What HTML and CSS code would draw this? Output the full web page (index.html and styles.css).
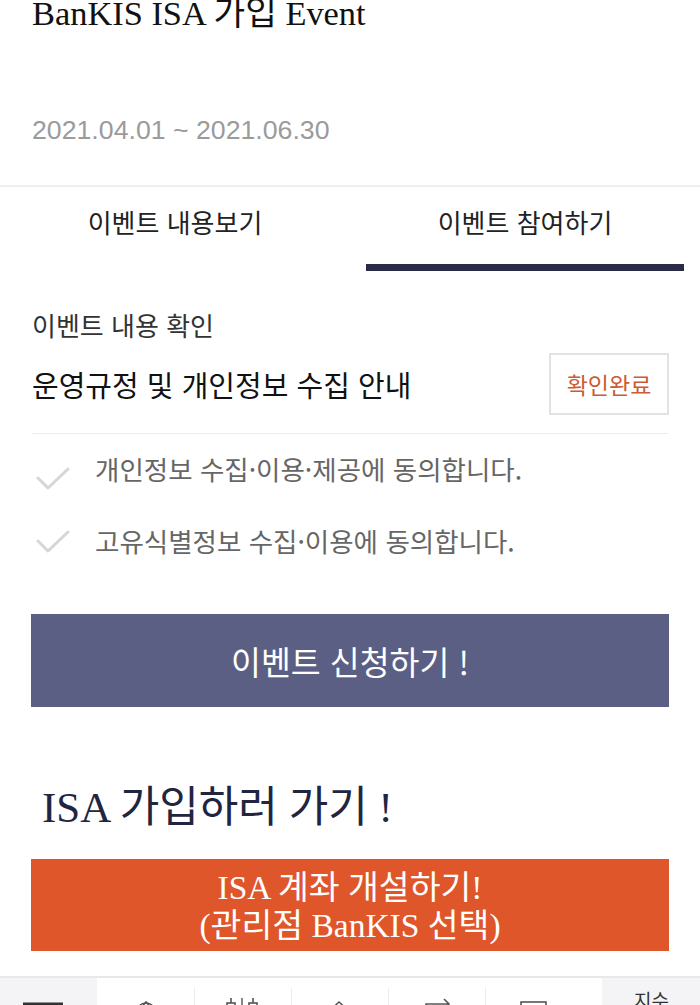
FILE: index.html
```html
<!DOCTYPE html>
<html lang="ko">
<head>
<meta charset="utf-8">
<title>BanKIS ISA 가입 Event</title>
<link rel="stylesheet" href="styles.css">
</head>
<body>
<div class="page">
  <header class="event-head">
    <h1 class="event-title">BanKIS ISA 가입 Event</h1>
    <p class="event-date">2021.04.01 ~ 2021.06.30</p>
  </header>

  <nav class="tabs">
    <div class="tab">이벤트 내용보기</div>
    <div class="tab tab-active">이벤트 참여하기</div>
  </nav>

  <section class="confirm">
    <p class="confirm-label">이벤트 내용 확인</p>
    <div class="confirm-row">
      <span class="confirm-title">운영규정 및 개인정보 수집 안내</span>
      <button class="confirm-btn" type="button">확인완료</button>
    </div>
  </section>

  <ul class="agree-list">
    <li class="agree-item agree-item-first">
      <svg class="check" viewBox="0 0 34 24" width="34" height="24"><path d="M2 12 L12 22 L32 3" fill="none" stroke="currentColor" stroke-width="3" stroke-linecap="round" stroke-linejoin="round"/></svg>
      <span class="agree-text">개인정보 수집·이용·제공에 동의합니다.</span>
    </li>
    <li class="agree-item">
      <svg class="check" viewBox="0 0 34 24" width="34" height="24"><path d="M2 12 L12 22 L32 3" fill="none" stroke="currentColor" stroke-width="3" stroke-linecap="round" stroke-linejoin="round"/></svg>
      <span class="agree-text">고유식별정보 수집·이용에 동의합니다.</span>
    </li>
  </ul>

  <button class="apply-btn" type="button">이벤트 신청하기 !</button>

  <h2 class="isa-title">ISA 가입하러 가기 !</h2>

  <a class="isa-btn" href="#">ISA 계좌 개설하기!<br>(관리점 BanKIS 선택)</a>

  <nav class="bottom-bar">
    <div class="bar-cell bar-cell-gray">
      <svg class="bar-icon" viewBox="0 0 97 40" width="97" height="40"><path d="M23 12 H63 M23 22 H63 M23 32 H63" stroke="#333" stroke-width="3"/></svg>
    </div>
    <div class="bar-cell">
      <svg class="bar-icon" viewBox="0 0 96 40" width="96" height="40"><circle cx="49" cy="20" r="9" fill="none" stroke="#555" stroke-width="1.6"/><path d="M43 17 L49 10 L55 17" fill="none" stroke="#555" stroke-width="1.6"/></svg>
    </div>
    <div class="bar-cell bar-cell-div">
      <svg class="bar-icon" viewBox="0 0 97 40" width="97" height="40"><path d="M37 6 V11 M59 6 V11" stroke="#555" stroke-width="1.6"/><rect x="33" y="11" width="8" height="16" fill="none" stroke="#555" stroke-width="1.6"/><rect x="55" y="11" width="8" height="16" fill="none" stroke="#555" stroke-width="1.6"/><path d="M48 6 V30" stroke="#555" stroke-width="1.4"/></svg>
    </div>
    <div class="bar-cell bar-cell-div">
      <svg class="bar-icon" viewBox="0 0 97 40" width="97" height="40"><path d="M37 20 L48 10 L59 20 M40 18 V32 H56 V18" fill="none" stroke="#555" stroke-width="1.6"/></svg>
    </div>
    <div class="bar-cell bar-cell-div">
      <svg class="bar-icon" viewBox="0 0 97 40" width="97" height="40"><path d="M38 18 V12 H61 M56 7 L61 12 L56 17 M59 24 V30 H36 M41 25 L36 30 L41 35" fill="none" stroke="#555" stroke-width="1.6"/></svg>
    </div>
    <div class="bar-cell bar-cell-div">
      <svg class="bar-icon" viewBox="0 0 97 40" width="97" height="40"><rect x="36" y="10" width="25" height="26" fill="none" stroke="#555" stroke-width="1.6"/><path d="M41 17 H56 M41 23 H56" stroke="#555" stroke-width="1.6"/></svg>
    </div>
    <div class="bar-gap"></div>
    <div class="bar-cell bar-cell-gray bar-cell-text">
      <span class="bar-label">지수</span>
    </div>
  </nav>
</div>
</body>
</html>
```

FILE: styles.css
```css
* {
  box-sizing: border-box;
}

html, body {
  margin: 0;
  padding: 0;
  background: #ffffff;
}

body {
  font-family: "Noto Sans CJK KR", "Noto Sans", sans-serif;
  color: #222;
  overflow: hidden;
}

.page {
  width: 700px;
  display: flex;
  flex-direction: column;
}

/* header */
.event-head {
  padding: 0 32px 42px;
  border-bottom: 2px solid #efefef;
  display: flex;
  flex-direction: column;
}

.event-title {
  margin: -3px 0 0;
  font-family: "Liberation Serif", "Noto Sans CJK KR", serif;
  font-weight: normal;
  font-size: 34.4px;
  line-height: 33px;
  color: #111;
  white-space: nowrap;
}

.event-date {
  margin: 87px 0 0;
  font-family: "Liberation Sans", Arial, sans-serif;
  font-size: 26.7px;
  line-height: 26px;
  color: #9b9b9b;
}

/* tabs */
.tabs {
  display: flex;
  gap: 32px;
  padding: 0 16px;
}

.tab {
  flex: 1;
  text-align: center;
  font-size: 26px;
  line-height: 34px;
  padding: 18px 0 25px;
  color: #222;
  border-bottom: 7px solid transparent;
}

.tab-active {
  border-bottom-color: #2a2c47;
}

/* confirm */
.confirm {
  padding: 0 32px;
  display: flex;
  flex-direction: column;
}

.confirm-label {
  margin: 37px 0 0;
  font-size: 26px;
  line-height: 34px;
  color: #333;
}

.confirm-row {
  margin-top: 11px;
  display: flex;
  align-items: center;
  justify-content: space-between;
  padding-bottom: 18px;
  border-bottom: 1px solid #ececec;
}

.confirm-title {
  font-size: 29px;
  line-height: 36px;
  color: #111;
}

.confirm-btn {
  width: 120px;
  height: 62px;
  border: 2px solid #e2e2e2;
  background: #fff;
  color: #cc5a32;
  font-family: "Noto Sans CJK KR", sans-serif;
  font-size: 23px;
  padding: 0;
  margin-right: -1px;
}

/* agree list */
.agree-list {
  list-style: none;
  margin: 17px 0 0;
  padding: 0 32px;
  display: flex;
  flex-direction: column;
  gap: 36px;
}

.agree-item {
  display: flex;
  align-items: center;
  gap: 25px;
  height: 36px;
}

.check {
  color: #d6d6d6;
  flex: none;
  margin-left: 4px;
}

.agree-item-first .check {
  margin-top: 18px;
}

.agree-text {
  font-size: 26.5px;
  line-height: 36px;
  color: #666;
  white-space: nowrap;
}

/* apply button */
.apply-btn {
  margin: 55px 31px 0;
  height: 93px;
  border: none;
  background: #5c5f84;
  color: #fff;
  font-family: "Noto Sans CJK KR", sans-serif;
  font-size: 32.5px;
  padding: 0;
}

/* isa */
.isa-title {
  margin: 78px 0 0 42px;
  font-family: "Liberation Serif", "Noto Sans CJK KR", serif;
  font-weight: normal;
  font-size: 43px;
  line-height: 46px;
  color: #22253f;
}

.isa-btn {
  margin: 28px 31px 0;
  height: 92px;
  background: #df562b;
  color: #fff;
  text-decoration: none;
  text-align: center;
  font-family: "Liberation Serif", "Noto Sans CJK KR", serif;
  font-size: 33.5px;
  line-height: 38px;
  padding-top: 10px;
}

/* bottom bar */
.bottom-bar {
  margin-top: 25px;
  height: 60px;
  border-top: 2px solid #e8e8e8;
  display: flex;
}

.bar-cell {
  width: 97px;
  flex: none;
  position: relative;
  padding-top: 14px;
}

.bar-cell-gray {
  background: #f4f4f6;
}

.bar-cell-div::before {
  content: "";
  position: absolute;
  left: 0;
  top: 10px;
  bottom: 0;
  width: 1px;
  background: #ececec;
}

.bar-gap {
  width: 20px;
  flex: none;
}

.bar-cell-text {
  width: 99px;
  padding-top: 10px;
  text-align: center;
}

.bar-icon {
  display: block;
}

.bar-label {
  font-size: 19px;
  line-height: 24px;
  color: #333;
}
```
